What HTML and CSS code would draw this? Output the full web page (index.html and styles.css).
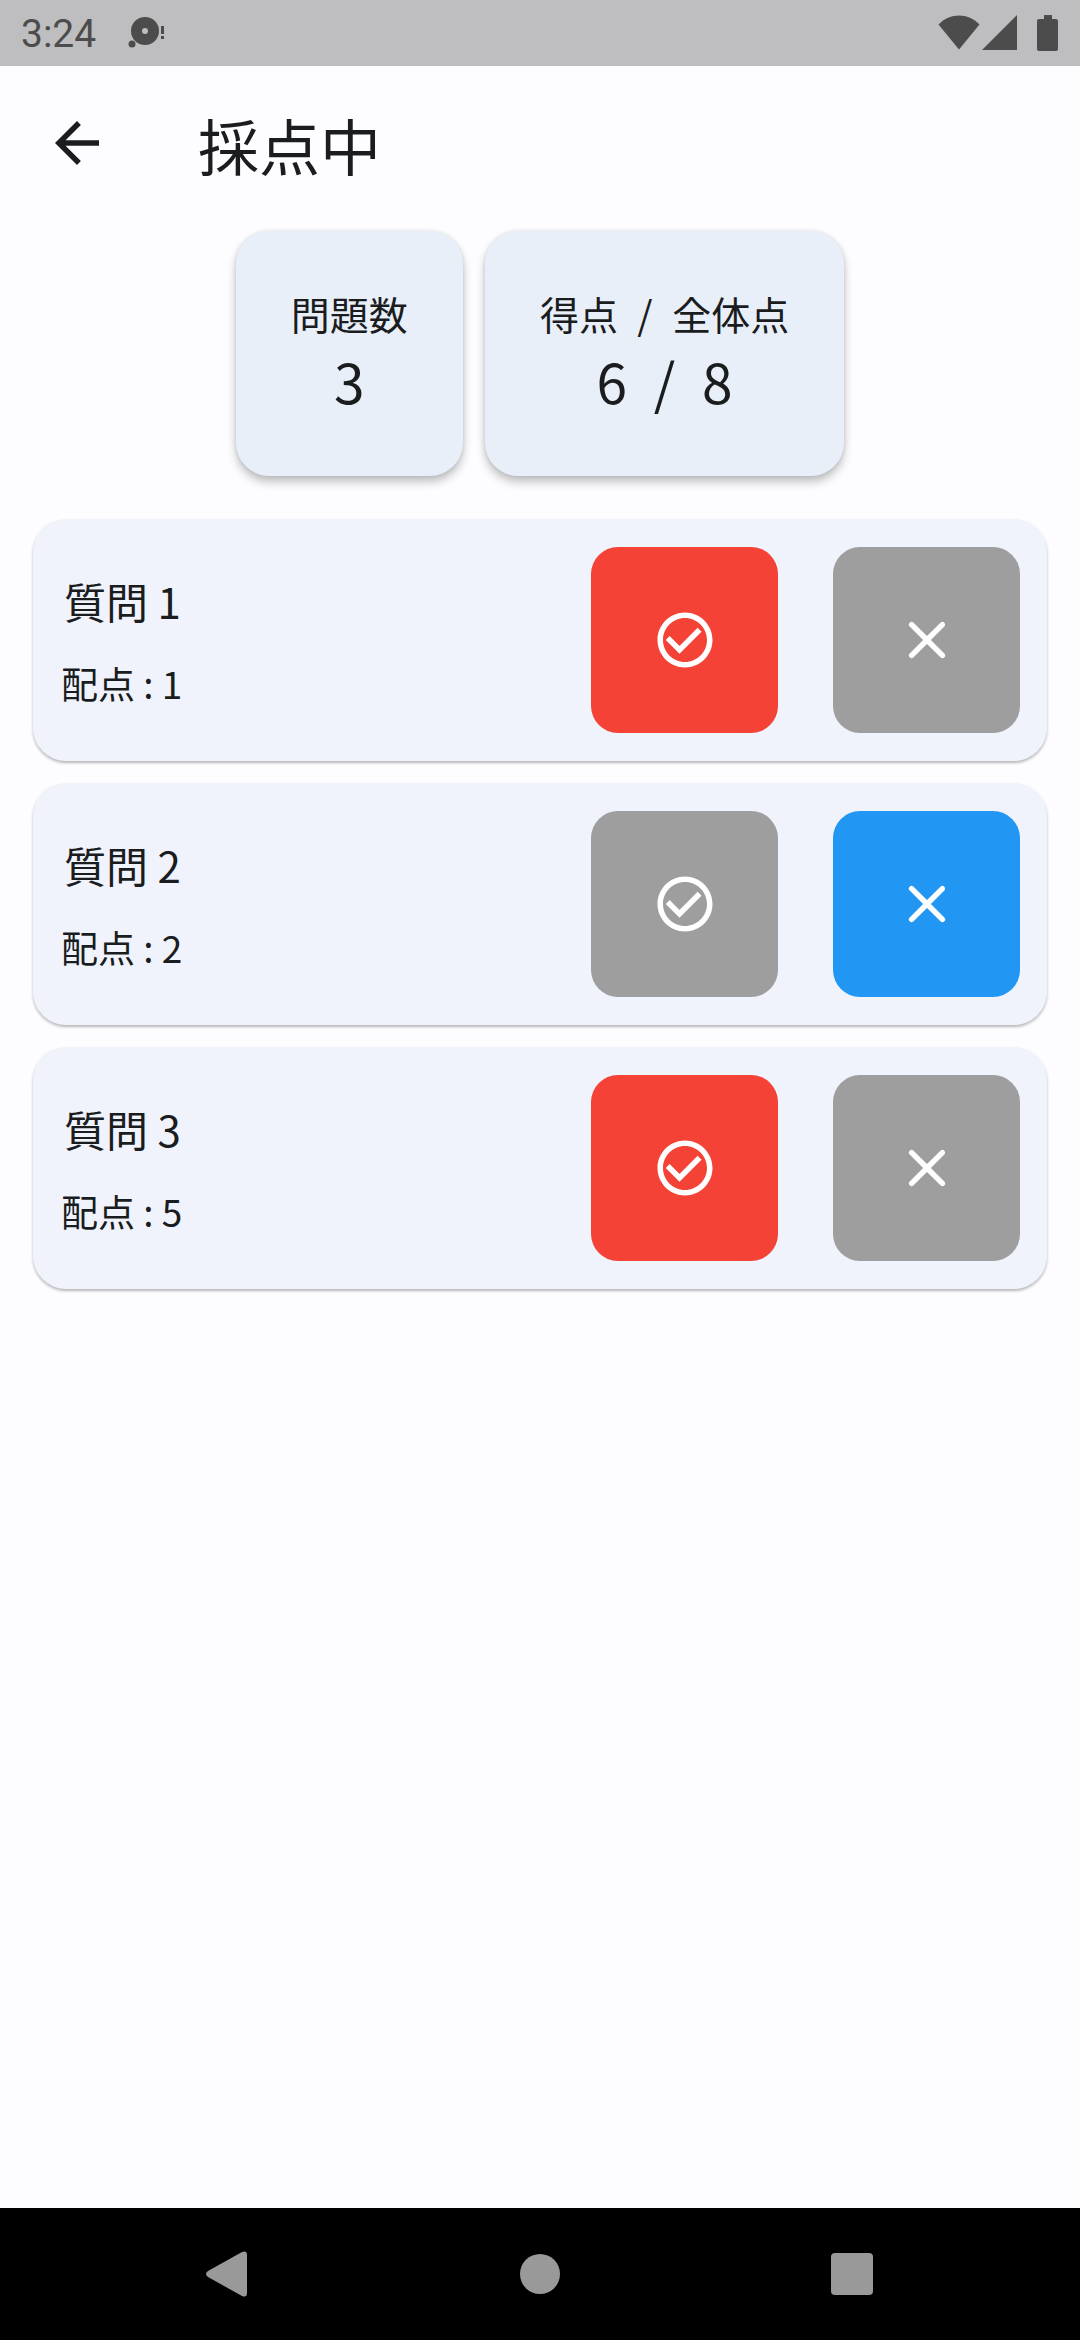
FILE: index.html
```html
<!DOCTYPE html>
<html lang="ja">
<head>
<meta charset="utf-8">
<meta name="viewport" content="width=device-width, initial-scale=1">
<title>採点中</title>
<link rel="stylesheet" href="styles.css">
</head>
<body>
<svg class="sprite" aria-hidden="true">
  <symbol id="check" viewBox="0 0 24 24"><path d="M16.59 7.58L10 14.17l-3.59-3.58L5 12l5 5 8-8zM12 2C6.48 2 2 6.48 2 12s4.48 10 10 10 10-4.48 10-10S17.52 2 12 2zm0 18c-4.42 0-8-3.58-8-8s3.58-8 8-8 8 3.58 8 8-3.58 8-8 8z"/></symbol>
  <symbol id="close" viewBox="0 0 24 24"><path d="M18.3 5.71a.996.996 0 0 0-1.41 0L12 10.59 7.11 5.7A.996.996 0 1 0 5.7 7.11L10.59 12 5.7 16.89a.996.996 0 1 0 1.41 1.41L12 13.41l4.89 4.89a.996.996 0 1 0 1.41-1.41L13.41 12l4.89-4.89c.38-.38.38-1.02 0-1.4z"/></symbol>
</svg>

<div class="status-bar">
  <div class="status-left">
    <span class="clock">3:24</span>
    <svg width="38" height="32" viewBox="0 0 38 32"><path fill-rule="evenodd" d="M17 0a14 14 0 1 1 0 28 14 14 0 0 1 0-28zm0 11a3 3 0 1 0 0 6 3 3 0 0 0 0-6z"/><circle cx="4" cy="27" r="3.500"/><path d="M33 9h3v8h-3zM33 19h3v3h-3z"/></svg>
  </div>
  <div class="status-right">
    <svg width="42" height="36" viewBox="0 0 42 36"><path d="M0.500 9.500C12-2.500 30-2.500 41.500 9.500L21 34.500z"/></svg>
    <svg width="36" height="36" viewBox="0 0 36 36"><path d="M35 0v35H0z"/></svg>
    <svg class="battery" width="22" height="36" viewBox="0 0 22 36"><path d="M7 0h8v4h4a2 2 0 0 1 2 2v28a2 2 0 0 1-2 2H2a2 2 0 0 1-2-2V6a2 2 0 0 1 2-2h5z"/></svg>
  </div>
</div>

<header class="app-bar">
  <button class="back" type="button" aria-label="戻る"><svg width="66" height="66" viewBox="0 0 24 24"><path d="M20 11H7.830l5.590-5.590L12 4l-8 8 8 8 1.410-1.410L7.830 13H20v-2z"/></svg></button>
  <h1 class="title">採点中</h1>
</header>

<main class="content">
  <section class="summary">
    <div class="stat"><span class="stat-label">問題数</span><span class="stat-value">3</span></div>
    <div class="stat"><span class="stat-label">得点&nbsp; <span class="slash">/</span>&nbsp; 全体点</span><span class="stat-value">6&nbsp; <span class="slash">/</span>&nbsp; 8</span></div>
  </section>

  <ul class="questions">
    <li class="question">
      <div class="info"><h2 class="name">質問 1</h2><p class="points">配点 : 1</p></div>
      <div class="marks">
        <button class="mark mark-correct" type="button" aria-label="正解" aria-pressed="true"><svg class="icon"><use href="#check"/></svg></button>
        <button class="mark" type="button" aria-label="不正解" aria-pressed="false"><svg class="icon"><use href="#close"/></svg></button>
      </div>
    </li>
    <li class="question">
      <div class="info"><h2 class="name">質問 2</h2><p class="points">配点 : 2</p></div>
      <div class="marks">
        <button class="mark" type="button" aria-label="正解" aria-pressed="false"><svg class="icon"><use href="#check"/></svg></button>
        <button class="mark mark-wrong" type="button" aria-label="不正解" aria-pressed="true"><svg class="icon"><use href="#close"/></svg></button>
      </div>
    </li>
    <li class="question">
      <div class="info"><h2 class="name">質問 3</h2><p class="points">配点 : 5</p></div>
      <div class="marks">
        <button class="mark mark-correct" type="button" aria-label="正解" aria-pressed="true"><svg class="icon"><use href="#check"/></svg></button>
        <button class="mark" type="button" aria-label="不正解" aria-pressed="false"><svg class="icon"><use href="#close"/></svg></button>
      </div>
    </li>
  </ul>
</main>

<nav class="nav-bar">
  <button class="nav-button" type="button" aria-label="戻る"><svg width="46" height="46" viewBox="0 0 46 46"><path d="M3 20 37 1Q42-1 42 4V42Q42 47 37 45L3 26Q-1 23 3 20z"/></svg></button>
  <button class="nav-button" type="button" aria-label="ホーム"><svg width="46" height="46" viewBox="0 0 46 46"><circle cx="23" cy="23" r="20"/></svg></button>
  <button class="nav-button" type="button" aria-label="履歴"><svg width="46" height="46" viewBox="0 0 46 46"><rect x="2" y="2" width="42" height="42" rx="4"/></svg></button>
</nav>
</body>
</html>
```
FILE: styles.css
```css
* {
  box-sizing: border-box;
}

body {
  margin: 0;
  min-height: 100vh;
  display: flex;
  flex-direction: column;
  background: #fdfdff;
  color: #1a1c1e;
  font-family: "Noto Sans CJK JP", "Noto Sans", sans-serif;
}

h1, h2, p, ul {
  margin: 0;
  padding: 0;
  font-weight: 400;
}

button {
  border: 0;
  padding: 0;
  background: none;
  cursor: pointer;
}

svg {
  display: block;
  fill: currentColor;
}

.sprite {
  position: absolute;
  width: 0;
  height: 0;
}

.status-bar {
  display: flex;
  align-items: center;
  justify-content: space-between;
  height: 66px;
  padding: 0 21px;
  background: #bebec0;
  color: #4c4c4c;
}

.status-left,
.status-right {
  display: flex;
  align-items: center;
}

.status-left {
  gap: 32px;
}

.status-right {
  gap: 2px;
}

.battery {
  margin-left: 17px;
}

.clock {
  padding-top: 2px;
  font-family: Roboto, sans-serif;
  font-size: 39px;
  line-height: 48px;
}

.app-bar {
  display: flex;
  align-items: center;
  gap: 88px;
  height: 154px;
  padding: 0 44px;
}

.back {
  color: #1a1c1e;
}

.title {
  padding-top: 4px;
  font-size: 61px;
  line-height: 88px;
}

.content {
  flex: 1;
  padding: 11px 33px;
}

.summary {
  display: flex;
  justify-content: center;
  gap: 22px;
}

.stat {
  display: flex;
  flex-direction: column;
  align-items: center;
  padding: 55px;
  border-radius: 33px;
  background: #e8eff9;
  box-shadow: 0 6px 10px rgba(0, 0, 0, 0.24), 0 0 4px rgba(0, 0, 0, 0.1);
}

.stat-label {
  font-size: 39px;
  line-height: 54px;
}

.stat-value {
  font-size: 55px;
  line-height: 81px;
}

.slash {
  margin: 0 2px;
}

.questions {
  display: flex;
  flex-direction: column;
  gap: 22px;
  margin-top: 43px;
  list-style: none;
}

.question {
  display: flex;
  align-items: center;
  justify-content: space-between;
  padding: 28px 27px;
  border-radius: 33px;
  background: #f0f3fb;
  box-shadow: 0 2px 3px rgba(0, 0, 0, 0.28);
}

.info {
  display: grid;
  gap: 22px;
  padding-top: 4px;
}

.name {
  padding-left: 4px;
  font-size: 42px;
  line-height: 60px;
}

.points {
  padding-left: 1px;
  font-size: 37px;
  line-height: 60px;
}

.marks {
  display: flex;
  gap: 55px;
}

.mark {
  display: grid;
  place-items: center;
  width: 187px;
  height: 186px;
  border-radius: 27px;
  background: #9e9e9e;
  color: #fff;
}

.mark-correct {
  background: #f44336;
}

.mark-wrong {
  background: #2196f3;
}

.icon {
  width: 66px;
  height: 66px;
}

.nav-bar {
  display: flex;
  align-items: center;
  justify-content: center;
  gap: 222px;
  height: 132px;
  background: #000;
}

.nav-button {
  display: grid;
  place-items: center;
  width: 90px;
  height: 90px;
  color: #999;
}
```
